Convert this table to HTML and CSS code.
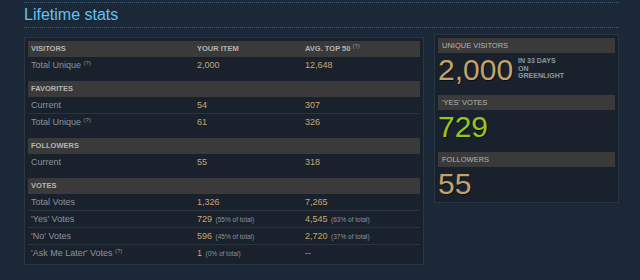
FILE: index.html
```html
<!DOCTYPE html>
<html>
<head>
<meta charset="utf-8">
<link rel="stylesheet" href="styles.css">
</head>
<body>
<div class="page">
  <h2 class="title">Lifetime stats</h2>
  <div class="content">
    <div class="table">
      <div class="group">
        <div class="row head"><span>Visitors</span><span>Your Item</span><span>Avg. Top 50 <sup>(?)</sup></span></div>
        <div class="row data"><span class="label">Total Unique <sup>(?)</sup></span><span class="val">2,000</span><span class="val">12,648</span></div>
      </div>
      <div class="group">
        <div class="row head"><span>Favorites</span><span></span><span></span></div>
        <div class="row data"><span class="label">Current</span><span class="val">54</span><span class="val">307</span></div>
        <div class="row data"><span class="label">Total Unique <sup>(?)</sup></span><span class="val">61</span><span class="val">326</span></div>
      </div>
      <div class="group">
        <div class="row head"><span>Followers</span><span></span><span></span></div>
        <div class="row data"><span class="label">Current</span><span class="val">55</span><span class="val">318</span></div>
      </div>
      <div class="group">
        <div class="row head"><span>Votes</span><span></span><span></span></div>
        <div class="row data"><span class="label">Total Votes</span><span class="val">1,326</span><span class="val">7,265</span></div>
        <div class="row data"><span class="label">'Yes' Votes</span><span class="val">729 <small class="pct">(55% of total)</small></span><span class="val">4,545 <small class="pct">(63% of total)</small></span></div>
        <div class="row data"><span class="label">'No' Votes</span><span class="val">596 <small class="pct">(45% of total)</small></span><span class="val">2,720 <small class="pct">(37% of total)</small></span></div>
        <div class="row data"><span class="label">'Ask Me Later' Votes <sup>(?)</sup></span><span class="val">1 <small class="pct">(0% of total)</small></span><span class="val">--</span></div>
      </div>
    </div>
    <div class="side">
      <div class="stat">
        <div class="stat-head">Unique Visitors</div>
        <div class="stat-val"><span class="big">2,000</span><span class="note">In 33 days<br>on<br>Greenlight</span></div>
      </div>
      <div class="stat">
        <div class="stat-head">'Yes' Votes</div>
        <div class="stat-val"><span class="big green">729</span></div>
      </div>
      <div class="stat">
        <div class="stat-head">Followers</div>
        <div class="stat-val"><span class="big">55</span></div>
      </div>
    </div>
  </div>
</div>
</body>
</html>
```
FILE: styles.css
```css
body {
  margin: 0;
  background: #1b2838;
  font-family: "Liberation Sans", Arial, sans-serif;
}

.page {
  width: 595px;
  margin-left: 24px;
  padding-top: 2px;
}

.title {
  margin: 0;
  padding: 2px 0;
  font-size: 16px;
  font-weight: normal;
  line-height: 20px;
  color: #66c0f4;
  border-top: 1px dotted #3e5d75;
  border-bottom: 1px dotted #3e5d75;
}

.content {
  display: flex;
  align-items: flex-start;
  gap: 10px;
  margin-top: 6px;
}

.table {
  width: 392px;
  margin-top: 3px;
  padding: 3px;
  background: #19212c;
  border: 1px solid #2b3442;
}

.group + .group {
  margin-top: 8px;
}

.row {
  display: grid;
  grid-template-columns: 166px 108px 1fr;
  height: 16px;
  line-height: 16px;
  font-size: 9px;
}

.row > span {
  padding-left: 3px;
  white-space: nowrap;
}

.head {
  background: #3a3a3a;
  color: #b4b4b4;
  font-size: 7.5px;
  font-weight: bold;
  text-transform: uppercase;
}

.data + .data {
  border-top: 1px solid #2a3340;
}

.label {
  color: #8c949c;
}

.val {
  color: #c8a772;
}

.pct {
  font-size: 6.5px;
  color: #8c949c;
  margin-left: 1px;
}

sup {
  font-size: 6px;
  font-weight: normal;
  line-height: 0;
  vertical-align: 3px;
  color: #8c949c;
}

.side {
  width: 177px;
  padding: 3px 3px 2px;
  background: #19212c;
  border: 1px solid #2b3442;
}

.stat + .stat {
  margin-top: 9px;
}

.stat-head {
  height: 15px;
  line-height: 15px;
  padding-left: 4px;
  background: #3a3a3a;
  color: #b4b4b4;
  font-size: 7.5px;
  text-transform: uppercase;
}

.stat-val {
  display: flex;
  align-items: flex-start;
  height: 33px;
}

.big {
  font-size: 30px;
  line-height: 33px;
  color: #c4a26b;
  text-shadow: 1px 1px 0 #0b0f14;
}

.big.green {
  color: #98c41c;
}

.note {
  margin: 4px 0 0 5px;
  font-size: 7px;
  font-weight: bold;
  line-height: 7.5px;
  color: #8f98a0;
  text-transform: uppercase;
}
```
